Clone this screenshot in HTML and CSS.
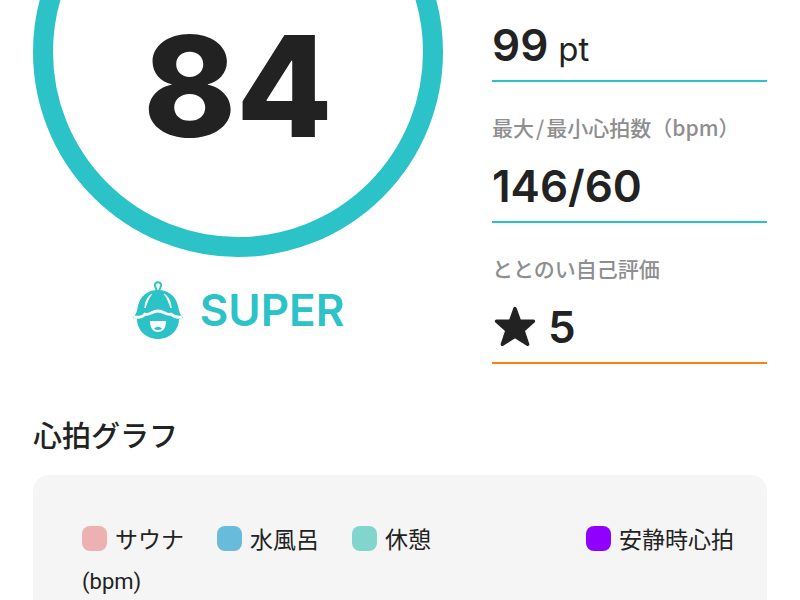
FILE: index.html
```html
<!DOCTYPE html>
<html lang="ja">
<head>
<meta charset="utf-8">
<meta name="viewport" content="width=device-width, initial-scale=1">
<title>心拍グラフ</title>
<link rel="stylesheet" href="styles.css">
</head>
<body>
<main class="page">
  <section class="summary">
    <div class="score">
      <div class="ring"><span class="score-value">84</span></div>
      <div class="rank">
        <svg class="rank-icon" viewBox="0 0 52 60" aria-hidden="true">
          <path class="line" d="M25 11L23 6C22 1 30 1 29 6L27 11"/>
          <path class="fill" d="M26 10C16 10 8 16 6 26C5 31 4 35 1 38L5 39C5 50 14 59 26 59C38 59 47 50 47 39L51 38C48 35 47 31 46 26C44 16 36 10 26 10Z"/>
          <path class="brim" d="M2 37C8 38 11 37 13 34C17 36 20 31 26 31C32 31 35 36 39 34C42 37 45 38 50 37"/>
          <path class="fold" d="M20 14C16 16 13 22 13 28C15 23 16 18 20 14ZM32 14C36 16 39 22 39 28C37 24 36 18 32 14Z"/>
          <path class="mouth" d="M18 41H34C34 48 31 52 26 52C21 52 18 48 18 41Z"/>
          <path class="fill" d="M22 49C24 46 28 46 30 49Q26 51 22 49Z"/>
        </svg>
        <span class="rank-name">SUPER</span>
      </div>
    </div>
    <dl class="stats">
      <div class="stat">
        <dd>99 <span class="unit">pt</span></dd>
      </div>
      <div class="stat">
        <dt>最大<span class="slash">/</span>最小心拍数（bpm）</dt>
        <dd>146/60</dd>
      </div>
      <div class="stat rating">
        <dt>ととのい自己評価</dt>
        <dd>
          <svg class="star" viewBox="0 0 40 40" aria-hidden="true"><path d="M20 4L24 15L36 15L27 23L31 35L20 28L9 35L13 23L4 15L16 15Z"/></svg>
          <span>5</span>
        </dd>
      </div>
    </dl>
  </section>
  <section class="graph">
    <h2>心拍グラフ</h2>
    <div class="panel">
      <ul class="legend">
        <li class="sauna">サウナ</li>
        <li class="water">水風呂</li>
        <li class="rest">休憩</li>
        <li class="resting">安静時心拍</li>
      </ul>
      <p class="axis">(bpm)</p>
    </div>
  </section>
</main>
</body>
</html>
```
FILE: styles.css
```css
* { box-sizing: border-box; }
html { overflow: hidden; }
body {
  margin: 0;
  background: #fff;
  color: #222;
  font-family: Inter, "Noto Sans CJK JP", sans-serif;
}
.page { padding: 0 33px; }
.summary {
  display: grid;
  grid-template-columns: 410fr 275fr;
  column-gap: 49px;
  align-items: end;
  margin-top: -153px;
}
.ring {
  display: flex;
  align-items: center;
  justify-content: center;
  aspect-ratio: 1;
  padding-top: 68px;
  border: 20px solid #2bc2c8;
  border-radius: 50%;
}
.score-value { font-size: 140px; font-weight: 800; line-height: 1; }
.rank {
  display: flex;
  align-items: center;
  justify-content: center;
  gap: 16px;
  height: 60px;
  margin: 23px 0 24px;
  color: #2bc2c8;
}
.rank-icon { width: 52px; height: 60px; }
.rank-icon .fill { fill: currentColor; }
.rank-icon .line { fill: none; stroke: currentColor; stroke-width: 2; }
.rank-icon .brim { fill: none; stroke: #fff; stroke-width: 3; stroke-linejoin: round; }
.rank-icon .fold { fill: #fff; stroke: #fff; stroke-width: 1; }
.rank-icon .mouth { fill: #fff; }
.rank-name { font-size: 44px; font-weight: 600; line-height: 60px; }
.stats { margin: 0; }
.stat { height: 141px; border-bottom: 2px solid #2bc2c8; padding-top: 31px; }
.stat.rating { border-color: #ff8010; }
.stat:first-child { display: flex; align-items: flex-end; }
dt {
  color: #8e8e8e;
  font: 500 21px/28px "Noto Sans CJK JP", sans-serif;
}
.slash { margin: 0 2px; }
dd {
  display: flex;
  align-items: baseline;
  gap: 10px;
  margin: 18px 0 0;
  font-size: 44px;
  font-weight: 600;
  line-height: 54px;
}
.stat:first-child dd { margin-bottom: 4px; }
.unit { font-size: 33px; font-weight: 400; }
.star { width: 46px; height: 46px; align-self: center; fill: #222; stroke: #222; stroke-width: 3; stroke-linejoin: round; }
h2 {
  margin: 49px 0 20px;
  font: 500 29px/42px "Noto Sans CJK JP", sans-serif;
}
.panel {
  min-height: 160px;
  padding: 46px 33px 0 49px;
  border-radius: 16px;
  background: #f5f5f5;
  font: 400 23px/34px "Noto Sans CJK JP", sans-serif;
}
.legend { display: flex; gap: 33px; margin: 0; padding: 0; list-style: none; }
.legend li { display: flex; align-items: center; gap: 8px; }
.legend li::before { content: ""; width: 25px; height: 25px; border-radius: 8px; }
.legend .sauna::before { background: #edb1b1; }
.legend .water::before { background: #68bbda; }
.legend .rest::before { background: #82d5cc; }
.legend .resting::before { background: #9000ff; }
.legend .resting { margin-left: auto; }
.axis { margin: 10px 0 0; font-family: Roboto, sans-serif; font-size: 22px; }
```
